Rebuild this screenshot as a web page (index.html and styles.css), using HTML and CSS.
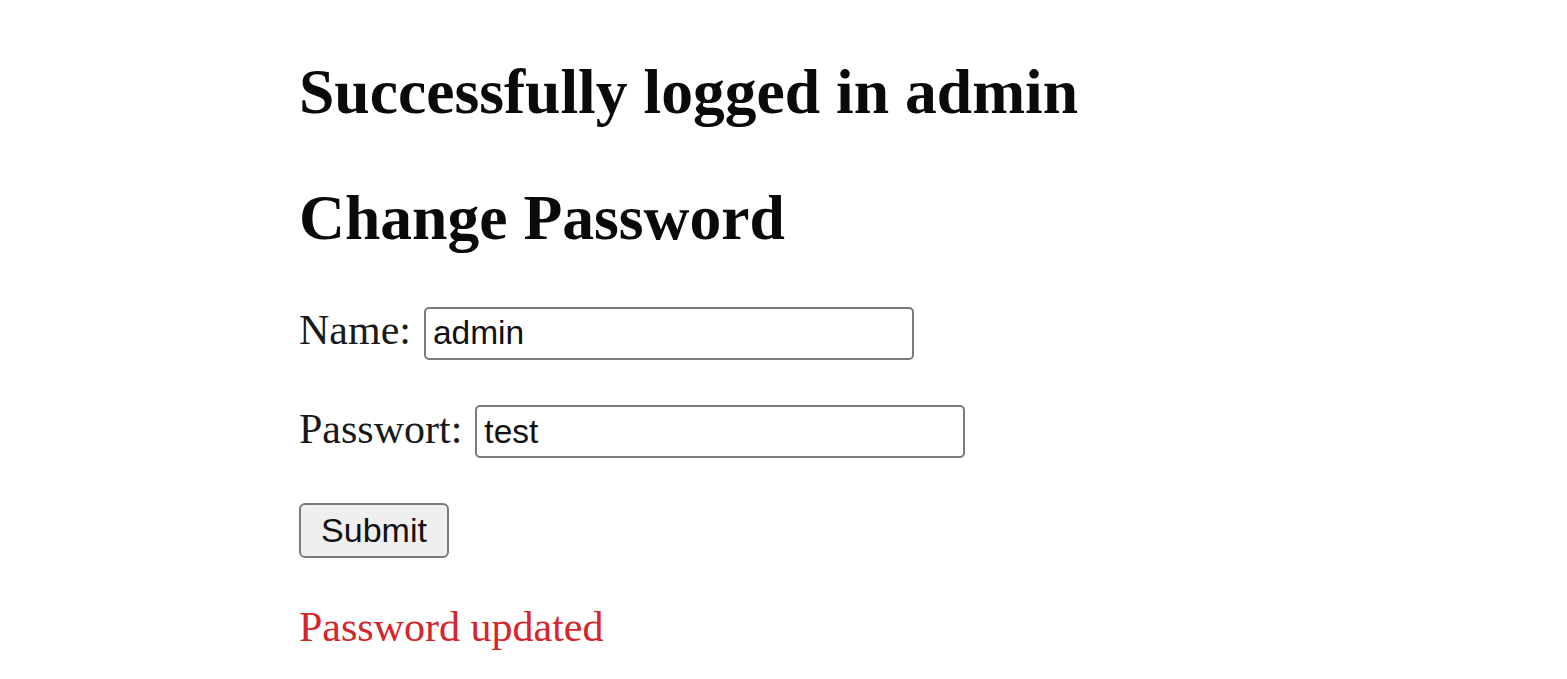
FILE: index.html
```html
<!DOCTYPE html>
<html lang="en">
<head>
<meta charset="utf-8">
<title>Change Password</title>
<link rel="stylesheet" href="styles.css">
</head>
<body>
<main class="page">
  <h2 class="title">Successfully logged in admin</h2>
  <h2 class="title title-second">Change Password</h2>
  <form class="form">
    <div class="row">
      <label class="label" for="name">Name:</label>
      <input class="field field-name" id="name" type="text" value="admin">
    </div>
    <div class="row">
      <label class="label" for="pw">Passwort:</label>
      <input class="field" id="pw" type="text" value="test">
    </div>
    <div class="row">
      <button class="submit" type="button">Submit</button>
    </div>
    <p class="message">Password updated</p>
  </form>
</main>
</body>
</html>
```

FILE: styles.css
```css
html, body {
  margin: 0;
  padding: 0;
  background: #ffffff;
}

body {
  font-family: "Liberation Serif", "Times New Roman", serif;
  font-size: 42px;
  color: #111111;
}

.page {
  display: flex;
  flex-direction: column;
  padding: 55px 0 0 299px;
}

.title {
  margin: 0;
  font-size: 63.6px;
  font-weight: bold;
  line-height: 1.15;
  color: #0a0a0a;
}

.title-second {
  margin-top: 53px;
}

.form {
  display: flex;
  flex-direction: column;
  gap: 45px;
  margin-top: 52px;
}

.row {
  display: flex;
  align-items: baseline;
  gap: 13px;
}

.label {
  line-height: 1.15;
  color: #1a1a1a;
}

.field {
  box-sizing: border-box;
  width: 490px;
  height: 53px;
  margin: 0;
  padding: 0 7px;
  border: 2px solid #7b7b7b;
  border-radius: 5px;
  background: #ffffff;
  font-family: "Liberation Sans", Arial, sans-serif;
  font-size: 33.5px;
  line-height: 1.15;
  color: #111111;
}

.submit {
  box-sizing: border-box;
  width: 150px;
  height: 55px;
  margin: 0;
  padding: 0;
  border: 2px solid #7b7b7b;
  border-radius: 6px;
  background: #efefef;
  font-family: "Liberation Sans", Arial, sans-serif;
  font-size: 34px;
  color: #111111;
}

.message {
  margin: 0;
  line-height: 1.15;
  color: #d4262c;
}
```
